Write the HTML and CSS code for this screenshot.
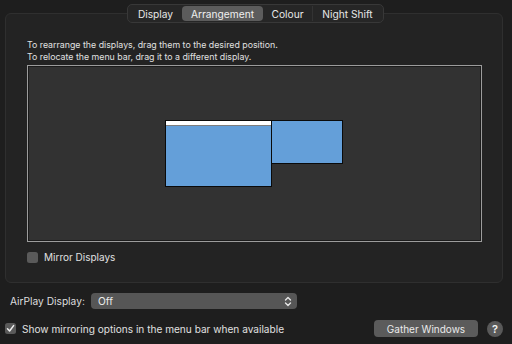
FILE: index.html
```html
<!DOCTYPE html>
<html lang="en">
<head>
    <meta charset="UTF-8">
    <title>Displays - Arrangement</title>
    <link rel="stylesheet" href="styles.css">
</head>
<body>
    <div class="tabs">
        <span class="tab t-display">Display</span>
        <span class="tab t-arrange active">Arrangement</span>
        <span class="tab t-colour">Colour</span>
        <span class="tab t-night">Night Shift</span>
    </div>

    <div class="panel">
        <p class="hint">
            To rearrange the displays, drag them to the desired position.<br>
            To relocate the menu bar, drag it to a different display.
        </p>

        <div class="canvas">
            <div class="screen main"><div class="menubar"></div></div>
            <div class="screen second"></div>
        </div>

        <label class="check-row mirror">
            <span class="checkbox"></span>
            <span>Mirror Displays</span>
        </label>
    </div>

    <div class="airplay-row">
        <span class="label">AirPlay Display:</span>
        <div class="popup">
            <span>Off</span>
            <svg class="chevrons" width="8" height="11" viewBox="0 0 8 11">
                <path d="M1.5 4 L4 1.5 L6.5 4" fill="none" stroke="#e6e6e6" stroke-width="1.4" stroke-linecap="round" stroke-linejoin="round"/>
                <path d="M1.5 7 L4 9.5 L6.5 7" fill="none" stroke="#e6e6e6" stroke-width="1.4" stroke-linecap="round" stroke-linejoin="round"/>
            </svg>
        </div>
    </div>

    <div class="bottom-row">
        <label class="check-row">
            <span class="checkbox checked">
                <svg width="9" height="9" viewBox="0 0 9 9">
                    <path d="M1.5 4.8 L3.6 7 L7.6 1.6" fill="none" stroke="#f0f0f0" stroke-width="1.5" stroke-linecap="round" stroke-linejoin="round"/>
                </svg>
            </span>
            <span>Show mirroring options in the menu bar when available</span>
        </label>
        <button class="btn">Gather Windows</button>
        <button class="help">?</button>
    </div>
</body>
</html>
```

FILE: styles.css
```css
* {
    margin: 0;
    padding: 0;
    box-sizing: border-box;
}

body {
    background: #1e1e1e;
    color: #dedede;
    font-family: 'Inter', 'Liberation Sans', sans-serif;
    font-size: 10px;
    width: 512px;
    height: 344px;
    overflow: hidden;
}

.tabs {
    position: relative;
    z-index: 1;
    display: flex;
    width: 257px;
    height: 19px;
    margin: 4px 0 0 127px;
    padding: 1px;
    background: #262626;
    border: 1px solid #383838;
    border-radius: 5px;
    font-size: 10.2px;
}

.tab {
    display: flex;
    align-items: center;
    justify-content: center;
    white-space: nowrap;
    border-radius: 4px;
    color: #e6e6e6;
}

.t-display { width: 53px; }
.t-arrange { width: 81px; }
.t-colour { width: 49px; }

.t-night {
    width: 70px;
    border-left: 1px solid #333;
    border-radius: 0 4px 4px 0;
}

.tab.active {
    background: #5c5c5c;
    color: #f0f0f0;
}

.panel {
    margin: -10px 9px 0 5px;
    height: 270px;
    padding: 25px 20px 0 21px;
    background: #232323;
    border: 1px solid #2f2f2f;
    border-radius: 6px;
}

.hint {
    font-size: 8.8px;
    line-height: 11.5px;
    color: #e0e0e0;
}

.canvas {
    display: flex;
    justify-content: center;
    align-items: flex-start;
    padding: 54px 2px 0 0;
    margin-top: 3px;
    height: 177px;
    background: #323232;
    border: 1px solid #9c9c9c;
    box-shadow: inset 0 0 0 1px #1b1b1b;
}

.screen {
    background: #649fd9;
    border: 1px solid #0a0a0a;
}

.screen.main {
    width: 107px;
    height: 67px;
}

.menubar {
    height: 5px;
    background: #ffffff;
    border-bottom: 1px solid #7d7d7d;
}

.screen.second {
    width: 72px;
    height: 44px;
    margin-left: -1px;
}

.check-row {
    display: flex;
    align-items: center;
    gap: 6px;
    color: #e0e0e0;
}

.mirror {
    margin-top: 9px;
    font-size: 10px;
}

.checkbox {
    display: flex;
    align-items: center;
    justify-content: center;
    width: 11px;
    height: 11px;
    background: #5a5a5a;
    border-radius: 2.5px;
    flex-shrink: 0;
}

.airplay-row {
    display: flex;
    align-items: center;
    margin: 10px 0 0 10px;
    font-size: 10.2px;
}

.label {
    width: 81px;
}

.popup {
    display: flex;
    align-items: center;
    justify-content: space-between;
    width: 206px;
    height: 16px;
    padding: 0 5px 0 7px;
    background: #565656;
    border-radius: 4px;
    color: #ececec;
}

.bottom-row {
    display: flex;
    align-items: center;
    margin: 11px 0 0 5px;
    font-size: 10.1px;
}

.bottom-row .check-row {
    flex: 1;
}

.btn {
    width: 104px;
    height: 17px;
    background: #5b5b5b;
    border: none;
    border-radius: 4px;
    color: #eaeaea;
    font-family: inherit;
    font-size: 10px;
}

.help {
    width: 16px;
    height: 16px;
    margin: 0 9px 0 9px;
    border-radius: 50%;
    border: none;
    background: #595959;
    color: #f0f0f0;
    font-family: inherit;
    font-size: 11px;
    font-weight: 600;
}
```
